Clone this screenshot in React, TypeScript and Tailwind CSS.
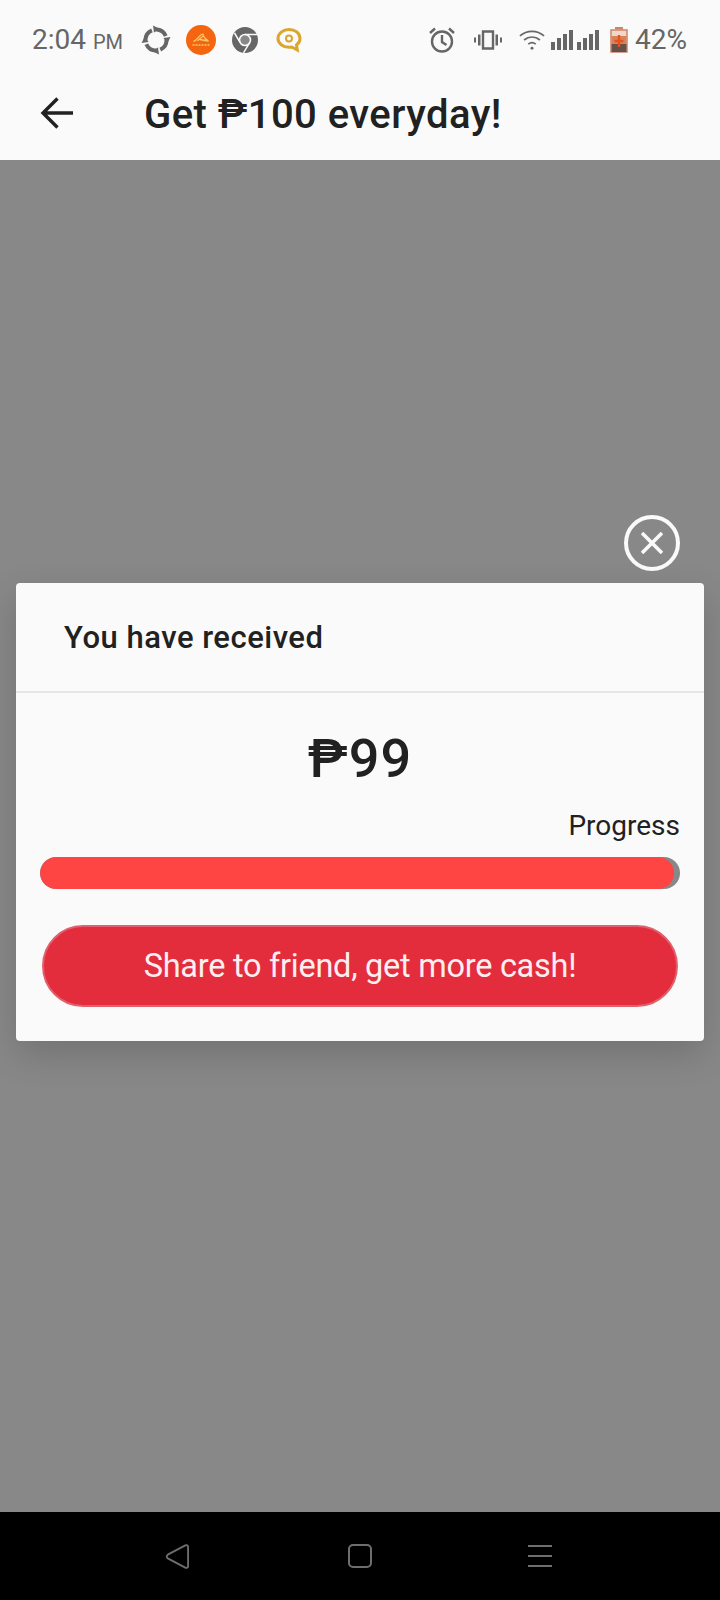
import React from "react";

const Sync = () => (
  <svg width="30" height="30" viewBox="0 0 30 30" fill="none">
    <circle cx="15" cy="15" r="10.5" stroke="#666" strokeWidth="4" strokeDasharray="12 4.5" />
    <path d="M12 0.5 L19 4 L13 7.5Z M29.5 12 L26 19 L22.5 13Z M18 29.5 L11 26 L17 22.5Z M0.5 18 L4 11 L7.5 17Z" fill="#666" />
  </svg>
);
const Ali = () => (
  <svg width="30" height="30" viewBox="0 0 30 30" fill="none">
    <circle cx="15" cy="15" r="15" fill="#f5650f" />
    <path d="M7.500 16.500c2.500-.5 5-5 8-7 2-1 2.500.5 1 2-1.500 1.300-4 3-5 4.500M14 14.500c2.500.5 5 1 8.500 1.500-2.500-1.500-4-3-5-5" stroke="#f7c76a" strokeWidth="1.300" />
    <path d="M6.500 20h17" stroke="#f7c76a" strokeWidth="1.300" strokeDasharray="2 1" />
  </svg>
);
const Chrome = () => (
  <svg width="26" height="26" viewBox="0 0 26 26" fill="none">
    <circle cx="13" cy="13" r="13" fill="#666" />
    <circle cx="13" cy="13" r="5.500" fill="#888" stroke="#fafafa" strokeWidth="1.600" />
    <path d="M13 7.500h12M8.200 15.700 2.500 6M17.700 15.700 11.500 25.800" stroke="#fafafa" strokeWidth="1.500" />
  </svg>
);
const Chat = () => (
  <svg width="26" height="26" viewBox="0 0 26 26" fill="none">
    <path d="M13 2.500c6 0 11 3.500 11 9 0 3-1.500 5-3.500 6.500l.8 5-5.500-3c-1 .2-1.800.3-2.800.3-6 0-11-3.800-11-8.800s5-9 11-9Z" stroke="#dba52e" strokeWidth="3" />
    <circle cx="13" cy="11.500" r="3" stroke="#dba52e" strokeWidth="2" />
  </svg>
);
const Alarm = () => (
  <svg width="26" height="26" viewBox="0 0 26 26" fill="none" stroke="#666" strokeWidth="2.400">
    <circle cx="13" cy="14.500" r="10" />
    <path d="M13 8v7l4.500 3M1 6l5-4.500M25 6l-5-4.500" />
  </svg>
);
const Vibrate = () => (
  <svg width="28" height="20" viewBox="0 0 28 20" fill="#666">
    <path d="M9 1.500h10v17H9z" fill="none" stroke="#666" strokeWidth="2.400" />
    <path d="M4 4.500h2.500v11H4zM21.500 4.500H24v11h-2.500zM0 7.500h2v5H0zM26 7.500h2v5h-2z" />
  </svg>
);
const Wifi = () => (
  <svg width="26" height="22" viewBox="0 0 28 22" fill="none" stroke="#666" strokeWidth="1.800">
    <path d="M1 6.500c7.500-6.500 18.500-6.500 26 0M5.500 11c5-4.300 12-4.300 17 0M10 15.500c2.500-2 5.500-2 8 0" />
    <circle cx="14" cy="20" r="1.600" fill="#666" stroke="none" />
  </svg>
);
const Signal = () => (
  <svg width="22" height="20" viewBox="0 0 22 20" fill="#666">
    <rect x="0" y="12" width="4" height="8" />
    <rect x="6" y="8" width="4" height="12" />
    <rect x="12" y="4" width="4" height="16" />
    <rect x="18" y="0" width="4" height="20" />
  </svg>
);
const Battery = () => (
  <svg width="18" height="26" viewBox="0 0 18 26" fill="none">
    <path d="M5 0h8v2.500H5z" fill="#c9866a" />
    <rect x="1" y="3" width="16" height="22" fill="#f3d6c8" stroke="#c9866a" strokeWidth="1.500" />
    <rect x="1.500" y="17" width="15" height="8" fill="#66504a" />
    <rect x="1.500" y="9" width="15" height="8" fill="#d8825c" />
    <path d="M9 8v12M4.500 14h9" stroke="#e8501c" strokeWidth="2.400" />
  </svg>
);

export default function App() {
  return (
    <div className="flex h-[1600px] w-[720px] flex-col overflow-hidden bg-[#888888] font-['Roboto',sans-serif] text-[#212121]">
      <header className="z-10 h-[160px] shrink-0 bg-[#fafafa]">
        <div className="flex h-[80px] items-center pl-[32px] pr-[33px] text-[#666666]">
          <span className="w-[90px] whitespace-nowrap text-[28px] leading-none">
            2:04 <span className="text-[20px]">PM</span>
          </span>
          <div className="ml-[19px] flex items-center">
            <Sync />
            <span className="ml-[15px] flex"><Ali /></span>
            <span className="ml-[16px] flex"><Chrome /></span>
            <span className="ml-[18px] flex"><Chat /></span>
          </div>
          <div className="ml-auto flex items-center">
            <Alarm />
            <span className="ml-[19px] flex"><Vibrate /></span>
            <span className="ml-[17px] flex"><Wifi /></span>
            <span className="ml-[6px] flex"><Signal /></span>
            <span className="ml-[4px] flex"><Signal /></span>
            <span className="ml-[11px] flex"><Battery /></span>
            <span className="ml-[7px] text-[28px] leading-none">42%</span>
          </div>
        </div>
        <div className="flex h-[66px] items-center pl-[40px]">
          <svg width="34" height="32" viewBox="0 0 34 32" fill="none" stroke="#212121" strokeWidth="3.400">
            <path d="M33 16H3M17.500 1.500 3 16l14.500 14.500" />
          </svg>
          <h1 className="ml-[70px] mt-[3px] text-[40px] font-medium leading-none tracking-[0.45px]">Get ₱100 everyday!</h1>
        </div>
      </header>

      <main className="flex flex-1 flex-col pl-[16px] pr-[16px] pt-[355px]">
        <div className="flex justify-end pr-[24px]">
          <div className="flex h-[56px] w-[56px] items-center justify-center rounded-full border-[4px] border-[#fafafa]">
            <svg width="22" height="22" viewBox="0 0 22 22" fill="none" stroke="#fafafa" strokeWidth="3.600">
              <path d="M1 1 21 21M21 1 1 21" />
            </svg>
          </div>
        </div>
        <section className="mt-[12px] h-[458px] rounded-[4px] bg-[#fafafa] shadow-[0_14px_36px_rgba(0,0,0,0.16)]">
          <div className="flex h-[110px] items-center border-b-2 border-[#e6e6e6] pl-[48px] pt-[2px] text-[31px] font-medium tracking-[0.5px]">
            You have received
          </div>
          <div className="px-[24px]">
            <div className="mt-[36px] text-center text-[54px] font-medium leading-[60px] tracking-[1px]">₱99</div>
            <div className="mt-[19px] text-right text-[28px] leading-[36px]">Progress</div>
            <div className="mt-[13px] h-[32px] overflow-hidden rounded-full bg-[#888888]">
              <div className="h-full w-[99%] rounded-full bg-[#ff4444]" />
            </div>
            <button className="mx-[2px] mt-[36px] flex h-[82px] w-[636px] items-center justify-center rounded-full border-2 border-[#e0606e] bg-[#e32c3c] text-[32.500px] tracking-[-0.27px] text-[#fdeef0]">
              Share to friend, get more cash!
            </button>
          </div>
        </section>
      </main>

      <nav className="flex h-[88px] shrink-0 items-center bg-black">
        <div className="ml-[165px] flex">
          <svg width="24" height="27" viewBox="0 0 26 28" fill="none" stroke="#6e6e6e" strokeWidth="2">
            <path d="M22 2 3 12c-1.500 1-1.500 3 0 4l19 10c1.500.8 3 0 3-1.500v-21c0-1.500-1.500-2.300-3-1.500Z" />
          </svg>
        </div>
        <div className="ml-[159px] flex">
          <svg width="24" height="24" viewBox="0 0 24 24" fill="none" stroke="#6e6e6e" strokeWidth="2">
            <rect x="1" y="1" width="22" height="22" rx="4" />
          </svg>
        </div>
        <div className="ml-[156px] flex">
          <svg width="24" height="22" viewBox="0 0 24 22" fill="none" stroke="#6e6e6e" strokeWidth="2">
            <path d="M0 1h24M0 11h24M0 21h24" />
          </svg>
        </div>
      </nav>
    </div>
  );
}
